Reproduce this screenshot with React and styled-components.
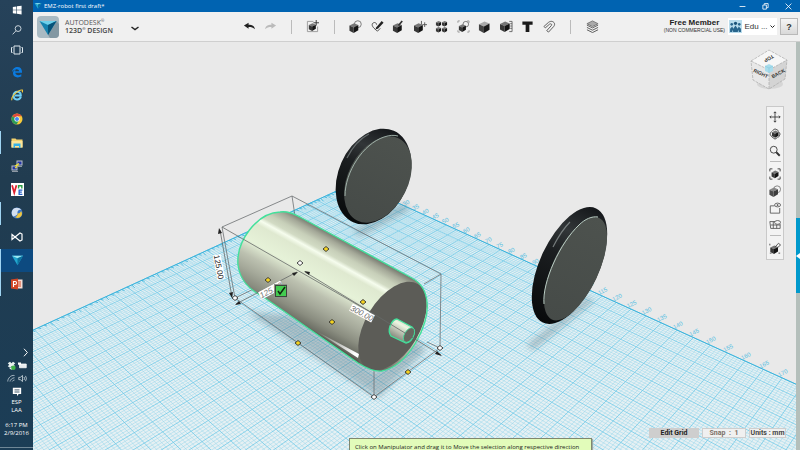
import React from "react";
import styled, { createGlobalStyle } from "styled-components";

const GlobalStyle = createGlobalStyle`
  * { box-sizing: border-box; }
  html, body, #root { height: 100%; }
  body { margin: 0; overflow: hidden; font-family: "Open Sans", "Noto Sans", sans-serif; }
  button { font: inherit; color: inherit; padding: 0; border: 0; background: none; cursor: pointer; }
  svg { display: block; }
`;

const Desktop = styled.div`
  display: grid;
  grid-template-columns: 33px 1fr;
  height: 100vh;
`;

/* ---------- Taskbar ---------- */
const Taskbar = styled.nav`
  display: flex;
  flex-direction: column;
  background: linear-gradient(#26425a, #213c50 40%, #1b3d56);
  color: #fff;
  min-height: 0;
`;
const SystemItems = styled.div`
  display: grid;
  grid-auto-rows: 20px;
`;
const AppItems = styled.div`
  display: flex;
  flex-direction: column;
  height: 236px;
`;
const TaskButton = styled.button`
  flex: 1;
  display: grid;
  place-items: center;
  background: ${(p) => (p.$active ? "#0d4a80" : "transparent")};
  border-left: 1px solid ${(p) => (p.$running ? "#9fd4f2" : "transparent")};
`;
const Tray = styled.div`
  margin-top: auto;
  display: flex;
  flex-direction: column;
  align-items: center;
  padding-bottom: 2px;
  font-size: 6px;
  line-height: 8px;
`;
const TrayRow = styled.div`
  display: flex;
  gap: 2px;
  height: 13px;
  align-items: center;
  align-self: ${(p) => (p.$end ? "flex-end" : "center")};
  padding: 0 3px;
`;
const TrayText = styled.div`
  text-align: center;
  padding-bottom: 7px;
`;
const ShowDesktop = styled.button`
  align-self: stretch;
  height: 4px;
  border-bottom: 1px solid #6f8797;
`;

/* ---------- Application window ---------- */
const Window = styled.main`
  display: grid;
  grid-template-rows: 12px 30px 1fr;
  min-width: 0;
  min-height: 0;
  background: #e9e9e9;
`;
const TitleBar = styled.header`
  display: flex;
  align-items: center;
  background: #0063b1;
  color: #fff;
  font-size: 6px;
  gap: 2px;
  padding-left: 1px;
`;
const WindowButtons = styled.div`
  margin-left: auto;
  display: flex;
  button { width: 23px; height: 12px; display: grid; place-items: center; }
`;
const Toolbar = styled.div`
  display: flex;
  align-items: center;
  background: #f0f0f0;
  border-bottom: 1px solid #cfcfcf;
  padding: 0 2px 0 4px;
`;
const Brand = styled.div`
  display: flex;
  align-items: center;
  gap: 6px;
  width: 202px;
`;
const BrandText = styled.div`
  font-size: 7px;
  line-height: 8px;
  color: #555;
  width: 56px;
  sup { font-size: 4px; line-height: 1px; }
  strong { font-weight: 600; color: #444; }
`;
const MenuButton = styled.button`
  display: grid;
  place-items: center;
  width: 16px;
  height: 22px;
  padding-top: 3px;
`;
const Tools = styled.div`
  display: flex;
  width: ${(p) => p.$width}px;
`;
const ToolButton = styled.button`
  flex: 1;
  height: 24px;
  display: grid;
  place-items: center;
  color: #222;
`;
const DividerCell = styled.span`
  flex: 1;
  display: grid;
  place-items: center;
`;
const Divider = styled.span`
  width: 1px;
  height: 14px;
  background: #bbb;
`;
const Account = styled.div`
  margin-left: auto;
  display: flex;
  align-items: center;
  gap: 3px;
  font-family: "Liberation Sans", Arial, sans-serif;
`;
const Membership = styled.div`
  text-align: center;
  font-size: 5px;
  line-height: 7px;
  color: #333;
  strong { display: block; font-size: 8px; line-height: 8px; color: #222; }
`;
const UserButton = styled.button`
  display: flex;
  align-items: center;
  justify-content: space-between;
  width: 49px;
  height: 17px;
  padding: 0 2px 0 1px;
  background: #fff;
  font-size: 8px;
  color: #333;
  white-space: nowrap;
`;
const HelpButton = styled.button`
  width: 18px;
  height: 17px;
  background: linear-gradient(#f5f5f5, #d9d9d9);
  border: 1px solid #b9b9b9;
  font-size: 9px;
  font-weight: 700;
  color: #333;
`;

/* ---------- Viewport ---------- */
const Body = styled.div`
  display: grid;
  grid-template-columns: 1fr 4px;
  min-height: 0;
`;
const Viewport = styled.section`
  position: relative;
  min-width: 0;
  min-height: 0;
  overflow: hidden;
`;
const SceneSvg = styled.svg`
  position: absolute;
  inset: 0;
  width: 100%;
  height: 100%;
`;
const SidePanel = styled.aside`
  background: #b4bfbb;
  padding-top: 176px;
`;
const PanelHandle = styled.button`
  display: grid;
  place-items: center;
  width: 4px;
  height: 75px;
  background: #0099cc;
`;
const ViewCube = styled.button`
  position: absolute;
  top: 5px;
  right: 7px;
`;
const NavBar = styled.div`
  position: absolute;
  top: 64px;
  right: 12px;
  width: 18px;
  display: flex;
  flex-direction: column;
  align-items: center;
  padding: 1px 0 3px;
  background: #f3f3f3;
  border: 1px solid #c9c9c9;
  button { height: 17px; width: 16px; display: grid; place-items: center; }
  hr { width: 11px; margin: 2px 0 3px; border: 0; border-top: 1px solid #bbb; }
`;
const StatusBar = styled.div`
  position: absolute;
  right: 10px;
  bottom: 12px;
  display: flex;
  gap: 3px;
  font: 700 7px/8px Roboto, sans-serif;
`;
const StatusButton = styled.button`
  height: 10px;
  min-width: ${(p) => p.$width}px;
  white-space: pre;
  color: ${(p) => p.$tone || "#444"};
  background: ${(p) => (p.$filled ? "#cecece" : "#f0f0f0")};
  border: 1px solid #cecece;
`;
const Hint = styled.div`
  position: absolute;
  left: 316px;
  bottom: -6px;
  min-width: 243px;
  padding: 0 5px;
  border: 1px solid #80876f;
  background: #e2fcba;
  color: #1c1c1c;
  font-size: 6px;
  line-height: 16px;
  white-space: nowrap;
  box-shadow: 1px 1px 1px #9aa;
`;

/* ---------- Icons ---------- */
function Cube({ x = 0, y = 0, s = 1, shade = ["#777", "#383838", "#151515"] }) {
  return (
    <g transform={`translate(${x} ${y}) scale(${s})`} stroke="none">
      <path d="M0 2.500 5 0 9.500 2 4.500 4.500Z" fill={shade[0]} />
      <path d="M0 2.500 4.500 4.500V10.500L0 8Z" fill={shade[1]} />
      <path d="M4.500 4.500 9.500 2V7.500L4.500 10.500Z" fill={shade[2]} />
    </g>
  );
}
const Icon = ({ children, size = 13 }) => (
  <svg width={size} height={size} viewBox="0 0 14 14" fill="none" stroke="#333" strokeWidth="1" aria-hidden="true">
    {children}
  </svg>
);

const creationTools = [
  ["Primitives", <><circle cx="9.500" cy="4.500" r="3.700" stroke="#777" /><Cube x={0.5} y={3.5} /></>],
  ["Sketch", <><path d="M7 12C3 9 .5 6.500 1.500 4 3.500 1.500 6 3 6 5M7 12l3-3" stroke="#444" /><path d="m5.500 8 6-7 2 2-6 6.500-2.500.5Z" fill="#222" stroke="none" /></>],
  ["Construct", <><Cube x={1} y={3.5} /><path d="m7 6 4-5" strokeWidth="1.800" /></>],
  ["Modify", <><Cube x={0} y={3.5} /><path d="M9 5h5M11.500 2.500v5M8 1v4" stroke="#555" /></>],
  ["Pattern", <><Cube x={1} y={1} s={0.58} /><Cube x={7.5} y={1} s={0.58} /><Cube x={1} y={7.5} s={0.58} /><Cube x={7.5} y={7.5} s={0.58} /></>],
  ["Grouping", <><path d="M1 3V1h2M11 1h2v2M13 11v2h-2M3 13H1v-2" stroke="#999" /><circle cx="9.500" cy="4.500" r="3" stroke="#777" /><Cube x={2} y={4.5} s={0.8} /></>],
  ["Combine", <Cube x={1} y={1.5} s={1.2} shade={["#aaa", "#444", "#1b1b1b"]} />],
  ["Measure", <><Cube x={0} y={1.5} s={1.1} /><path d="M10 1.500h3v11h-3M11 4h2M11 6.500h2M11 9h2" stroke="#666" /></>],
  ["Text", <path d="M1.500 1.500h11V5H9v8H5V5H1.500Z" fill="#1a1a1a" stroke="none" />],
  ["Snap", <path d="m1 7 5-4.500c4-3 8.500 1 5.500 4.500L6 13 4 11.500 9 6c1-1.500-.5-2.500-2-1.500L2.500 8.500Z" stroke="#555" />],
];

const navTools = [
  ["Pan", <path d="M7 1v12M1 7h12M5.500 2.500 7 1l1.500 1.500M5.500 11.500 7 13l1.500-1.500M2.500 5.500 1 7l1.500 1.500M11.500 5.500 13 7l-1.500 1.500" />],
  ["Orbit", <><path d="M3 10 1 7l2-3M4 3l3-2 4 2M11 4l2 3-2 4M10 11l-3 2-4-3" /><Cube x={3.5} y={3} s={0.8} /></>],
  ["Zoom", <><circle cx="5.500" cy="5.500" r="4" /><path d="m8.500 8.500 4 4" strokeWidth="2.200" /></>],
  null,
  ["Fit", <><path d="M1 4V1h3M10 1h3v3M13 10v3h-3M4 13H1v-3" /><Cube x={3} y={3} s={0.85} /></>],
  ["Material", <><circle cx="9.500" cy="5" r="4" stroke="#777" /><Cube x={0.5} y={3} s={1.05} shade={["#888", "#4c4c4c", "#3c3c3c"]} /></>],
  ["Solid visibility", <><path d="M1.500 4.500h5M12.500 7v6h-11V4.500" stroke="#555" /><ellipse cx="10" cy="3.500" rx="3.500" ry="2.200" stroke="#555" /><circle cx="10" cy="3.500" r="1" fill="#333" stroke="none" /></>],
  ["Grid visibility", <><path d="M1 3h6M2 7h11M2 11h11M1 3l1 8M5 3v8M9 7v4M13 6v5" stroke="#555" /><ellipse cx="10" cy="4" rx="3.500" ry="2.200" stroke="#555" /></>],
  null,
  ["Snapping", <><Cube x={1.5} y={4} s={0.95} /><path d="M1 2v2M1 13h2M11 13h2M7 6l4-4.500 2.500 2-4 3.500" stroke="#444" /></>],
];

const AppLogo = ({ size }) => (
  <svg width={size} height={size} viewBox="0 0 22 22" aria-hidden="true">
    <rect width="22" height="22" rx="4" fill="#a9bac3" />
    <path d="m19.500 5 2.500 3v10q0 4-4 4h-5l-2-3Z" fill="#8297a2" />
    <path d="M2.500 5h17L11 19Z" fill="#1682ae" />
    <path d="M2.500 5h17L11 9Z" fill="#6fd0ea" />
    <path d="M11 9v10l8.500-14Z" fill="#075278" />
  </svg>
);
const Gem = ({ size = 13 }) => (
  <svg width={size} height={size} viewBox="0 0 14 14" aria-hidden="true">
    <path d="M1 2h12L7 12Z" fill="#22a7cf" />
    <path d="M1 2h12L7 4.500Z" fill="#9ce8f4" />
    <path d="M7 4.500V12l6-10Z" fill="#0c719d" />
  </svg>
);

const TaskIcon = ({ children, size = 12 }) => (
  <svg width={size} height={size} viewBox="0 0 12 12" fill="none" aria-hidden="true">{children}</svg>
);

const systemItems = [
  ["Start", <TaskIcon size={10}><path d="M1 2.300 5.300 1.700v4H1ZM6 1.600 11.500.8v4.900H6ZM1 6.400h4.300v4L1 9.800ZM6 6.400h5.500v5L6 10.500Z" fill="#fff" /></TaskIcon>],
  ["Search", <TaskIcon size={10}><circle cx="7.300" cy="4.300" r="3.500" stroke="#e6edf2" /><path d="m4.800 6.900-4 4.300" stroke="#e6edf2" /></TaskIcon>],
  ["Task view", <TaskIcon><path d="M3 2h6v8H3ZM1.500 3.500H.5v5h1M10.500 3.500h1v5h-1" stroke="#dfe8ee" /></TaskIcon>],
];
const appItems = [
  ["Edge", {}, <TaskIcon><path d="M1 6C1.500 2.500 4 1 6.500 1 9.500 1 11.300 3.200 11 6.800H4.300c.2 2.500 3.500 3 6 1.500v2.300C6 12.500 1.800 11 2 7c.1-1.900 1.400-3 3-3.500-.6.5-.8 1-.9 1.700h4C8 2.500 3.500 2.300 1 6Z" fill="#0b7be0" /></TaskIcon>],
  ["Internet Explorer", {}, <TaskIcon><path d="M9.800 7.800C8.800 11.500 2.500 11.500 2.500 6.500S9.800 1.800 9.800 6.500H4" stroke="#6fd0f6" strokeWidth="2" /><path d="M1 11.300C-.5 8 7 .5 11.300 1c.5.500.3 1.500-.3 2.300" stroke="#f5c93a" strokeWidth="1.100" /></TaskIcon>],
  ["Chrome", {}, <TaskIcon><circle cx="6" cy="6" r="5.500" fill="#f7cb3b" /><path d="M6 6 1.200 3.300A5.500 5.500 0 0 1 10.800 3.300H6Z" fill="#de4a3b" /><path d="M6 6 1.200 3.300A5.500 5.500 0 0 0 5.500 11.500L8 7.500Z" fill="#2d9d58" /><circle cx="6" cy="6" r="2.600" fill="#fff" /><circle cx="6" cy="6" r="2" fill="#4285f4" /></TaskIcon>],
  ["File Explorer", { $running: true }, <TaskIcon><path d="M.5 1.500h4l1 1h6v8H.5Z" fill="#f5d36d" /><path d="M.5 4h11v6.500H.5Z" fill="#fce59a" /><path d="M2.500 6.500h7v4.500H8V9H4v2H2.500Z" fill="#35b2e8" /></TaskIcon>],
  ["PuTTY", {}, <TaskIcon><path d="M5.500.5h6v5h-6ZM.5 5.500h6v5h-6Z" fill="#b7bfc9" /><path d="M6.500 1.500h4v3h-4ZM1.500 6.500h4v3h-4Z" fill="#2437a8" /><path d="m8 3.500-3 2 2 .5-3 2" stroke="#f1df35" strokeWidth="1.200" /><path d="M6 6.500h5M1 11.500h6" stroke="#8d98a4" /></TaskIcon>],
  ["VNC", {}, <TaskIcon size={13}><path d="M0 0h12v12H0Z" fill="#fff" /><path d="m1 2 2 7 2-7" stroke="#e02230" strokeWidth="1.600" /><path d="M7 5V2.500h3V5" stroke="#2b9d45" strokeWidth="1.300" /><path d="M10.500 6.500H7.500v4h3M7.500 8.500h2.500" stroke="#2560c8" strokeWidth="1.200" /></TaskIcon>],
  ["Browser", { $running: true }, <TaskIcon><circle cx="6" cy="6" r="5.500" fill="#3a74c8" /><path d="M1 4C2 0 8-.5 10.500 3 8 2 6 4 6.500 6S4 9 2 9.500Q0 7 1 4Z" fill="#d3dff0" /><path d="M6.500 6c1 1 3 0 3.500-2 1.500 2 1.500 5-1.500 6.500-2 .8-4 .2-4.500-.5 2-.5 3-2 2.500-4Z" fill="#f0c63d" /></TaskIcon>],
  ["Visual Studio", {}, <TaskIcon><path d="M1 3.500 9 10l2-1V3L9 2 1 8.500Z" stroke="#fff" strokeWidth="1.200" /></TaskIcon>],
  ["123D Design", { $active: true, $running: true }, <Gem />],
  ["PowerPoint", { $running: true }, <TaskIcon><path d="M5 1.500h6.500v9H5Z" fill="#f5ddd5" /><path d="M7 4h3M7 6h3M7 8h3" stroke="#d24625" /><path d="M0 1.500 7 .5v11L0 10.500Z" fill="#d24625" /><path d="M2.500 9V3.500h1.700q1.300 0 1.300 1.500T4 6.500H2.500" stroke="#fff" strokeWidth="1.100" /></TaskIcon>],
];

/* ---------- 3D scene ---------- */
/* Ground plane to screen projection; one unit of u is 300 mm, one unit of v is 125 mm. */
function project(u, v) {
  const w = -0.164 * u + 0.0702 * v + 1;
  return [(77.7 * u + 86.06 * v + 235) / w, (31.8 * u - 15.2 * v + 298) / w];
}
const U0 = -0.487, U1 = 2.95, V0 = -3.45, V1 = 3.026;
const STEP_U = 0.079, STEP_V = 0.19;

function segments(divide, skip) {
  let d = "";
  const add = (a, b) => { d += `M${a[0].toFixed(1)} ${a[1].toFixed(1)}L${b[0].toFixed(1)} ${b[1].toFixed(1)}`; };
  for (let i = 0, u = U0; u < U1; i++, u = U0 + (i * STEP_U) / divide) {
    if (!skip || i % divide) add(project(u, V0), project(u, V1));
  }
  for (let i = 0, v = V1; v > V0; i++, v = V1 - (i * STEP_V) / divide) {
    if (!skip || i % divide) add(project(U0, v), project(U1, v));
  }
  return d;
}
const corners = [[U0, V0], [U0, V1], [U1, V1], [U1, V0]].map(([u, v]) => project(u, v).join(",")).join(" ");
const minorLines = segments(5, true);
const majorLines = segments(1, false);
const edgeLabels = Array.from({ length: 32 }, (_, i) => {
  const [x, y] = project(U0 + (i + 3) * STEP_U, V1);
  return { x: x - 3, y: y - 1, text: (i + 3) * 5 };
});
const edgeTicks = Array.from({ length: 80 }, (_, i) => {
  const [x, y] = project(U0, V1 - i * 0.068);
  return `M${x.toFixed(1)} ${y.toFixed(1)}l3 ${i % 5 ? 1 : 3}`;
}).join("");

const bodyOutline = "M280 212C288 211 294 214 300 217L412 278C421 283 426 290 427 302 430 325 408 366 382 371 375 372 366 368 358 363L262 296C248 289 240 280 238 265 236 242 256 213 280 212Z";
const controlPoints = [[326, 249], [268, 280], [363, 302], [332, 322], [298, 343], [408, 372]];
const cornerPoints = [[300, 263], [235, 298], [374, 397], [440, 348]];

const Marker = ({ x, y, fill = "#fff" }) => (
  <path d={`M${x - 3} ${y}l3-2.500 3 2.500-3 2.500Z`} fill={fill} stroke="#333" strokeWidth=".9" />
);
const DimensionLabel = ({ x, y, angle, children, width = 25, tone = "#222", slant = "normal" }) => (
  <g transform={`translate(${x} ${y}) rotate(${angle})`}>
    <rect x={-width / 2} y="-4" width={width} height="8" fill="#fff" />
    <text textAnchor="middle" y="3" fontSize="8" fontStyle={slant} fontFamily="Liberation Sans, Arial, sans-serif" fill={tone}>{children}</text>
  </g>
);

function Scene() {
  return (
    <SceneSvg viewBox="33 42 763 408" preserveAspectRatio="xMidYMid slice" role="img" aria-label="Robot body and two wheels on the work plane">
      <defs>
        <linearGradient id="body" gradientUnits="userSpaceOnUse" x1="355" y1="247" x2="309" y2="330">
          <stop offset="0" stopColor="#777a70" />
          <stop offset=".06" stopColor="#a4a898" />
          <stop offset=".14" stopColor="#c7cfb9" />
          <stop offset=".2" stopColor="#d2dbc4" />
          <stop offset=".24" stopColor="#f6fdee" />
          <stop offset=".29" stopColor="#dfe9d0" />
          <stop offset=".48" stopColor="#e6f2d8" />
          <stop offset=".53" stopColor="#d5dec8" />
          <stop offset=".62" stopColor="#bcc1b0" />
          <stop offset=".75" stopColor="#a5a99a" />
          <stop offset=".88" stopColor="#8a8d80" />
          <stop offset="1" stopColor="#65675e" />
        </linearGradient>
        <linearGradient id="pin" x1="1" y1="0" x2="0.400" y2="1">
          <stop offset="0" stopColor="#989b8e" />
          <stop offset=".4" stopColor="#eef6e3" />
          <stop offset="1" stopColor="#77796e" />
        </linearGradient>
        <linearGradient id="face" x1="0" y1="0" x2="1" y2="0">
          <stop offset="0" stopColor="#464b48" />
          <stop offset="1" stopColor="#4d524e" />
        </linearGradient>
        <linearGradient id="tire" x1="0" y1="0" x2="1" y2="0">
          <stop offset="0" stopColor="#080a0b" />
          <stop offset=".55" stopColor="#1b1e20" />
          <stop offset=".75" stopColor="#323638" />
          <stop offset="1" stopColor="#14171a" />
        </linearGradient>
        <linearGradient id="shine" x1="0" y1="0" x2="1" y2="0.700">
          <stop offset="0" stopColor="#fff" stopOpacity="0" />
          <stop offset="1" stopColor="#fff" />
        </linearGradient>
        <filter id="soft"><feGaussianBlur stdDeviation="3" /></filter>
      </defs>

      <polygon points={corners} fill="#e6f0f3" />
      <path d={minorLines} stroke="#86d0e9" strokeWidth=".5" opacity=".85" />
      <path d={majorLines} stroke="#5ec4e6" strokeWidth=".8" opacity=".85" />
      <path d={edgeTicks} stroke="#3ab3dc" strokeWidth=".8" />
      <polygon points={corners} fill="none" stroke="#3ab3dc" strokeWidth="1" />
      <g fontSize="6" fontFamily="Liberation Sans, Arial, sans-serif" fill="#56bfe2">
        {edgeLabels.map((l) => (
          <text key={l.text} transform={`translate(${l.x} ${l.y}) rotate(-26)`}>{l.text}</text>
        ))}
      </g>

      <g fill="#5b7480" filter="url(#soft)" opacity=".38">
        <path d="M247 312 290 315 376 372 415 338 426 350 378 398Z" />
        <path d="M352 232 402 204 411 209 362 236Z" />
        <path d="m527 345 60-48 7 4-61 49Z" />
      </g>

      <g>
        <ellipse cx="373.500" cy="176.500" rx="50" ry="35" transform="rotate(-66 373.500 176.500)" fill="url(#tire)" />
        <ellipse cx="378" cy="179.500" rx="46" ry="30" transform="rotate(-63 378 179.500)" fill="url(#face)" />
        <path d="M345 196C345 172 363 144 384 137 390 135 394 135 398 136" fill="none" stroke="#a9bcb3" strokeWidth=".9" />
        <path d="M347 158C353 146 361 138 369 134" fill="none" stroke="#7f8788" strokeWidth="1.200" opacity=".7" />
      </g>
      <g>
        <ellipse cx="569.500" cy="265.500" rx="63" ry="29.500" transform="rotate(-65 569.500 265.500)" fill="url(#tire)" />
        <ellipse cx="575.500" cy="268.700" rx="56" ry="23" transform="rotate(-65 575.500 268.700)" fill="url(#face)" />
        <path d="M544 304C542 282 560 243 579 225 585 219 592 216 598 217" fill="none" stroke="#b9ccc3" strokeWidth="1" />
        <path d="M553 247c5-10 9-17 17-25" fill="none" stroke="#899191" strokeWidth="1.200" opacity=".8" />
      </g>

      <path d="M222 227 292 196 441 274 440 348 374 397 235 298ZM292 196l3 20M374 397V370M441 274l-17 10M427 342l13 6M235 298l25-12" fill="none" stroke="#6c7072" strokeWidth=".8" />
      <path d={bodyOutline} fill="url(#body)" />
      <path d="M300 322 358 360 360 364Z" fill="#55574f" opacity=".7" />
      <path d="M316 331 359 354 358 358Z" fill="url(#shine)" />
      <ellipse cx="392.500" cy="326" rx="49" ry="27" transform="rotate(-59 392.500 326)" fill="#5c5c57" />
      <path d={bodyOutline} fill="none" stroke="#43e09b" strokeWidth="1.400" />
      <path d="M397 319 412 327Q415 330 414 334 412 342 406 343L391 336Q388 332 390 326 393 319 397 319Z" fill="url(#pin)" stroke="#43e09b" strokeWidth="1.300" />
      <ellipse cx="409" cy="335" rx="8" ry="4.500" transform="rotate(-60 409 335)" fill="#66675f" stroke="#43e09b" strokeWidth=".8" />

      <path d="M222 227 372 313M305 272 441 355M236 304 297 272M220 230 232 297" fill="none" stroke="#666a68" strokeWidth=".8" />
      <path d="m219 228-1 6 4-1ZM232 298l-3-5 4-1ZM235 305l6-1-2-3ZM298 272l-6 1 2 3ZM304 271l5 4 1-3ZM442 356l-7-2 2-3Z" fill="#222" />
      {cornerPoints.map(([x, y]) => <Marker key={x} x={x} y={y} />)}
      {controlPoints.map(([x, y]) => <Marker key={x} x={x} y={y} fill="#f4d321" />)}
      <DimensionLabel x={219} y={267} angle={79}>125.00</DimensionLabel>
      <DimensionLabel x={271} y={290} angle={-28} tone="#777" slant="italic">125.00</DimensionLabel>
      <DimensionLabel x={362} y={313} angle={28} tone="#666" slant="italic">300.00</DimensionLabel>
      <rect x="274" y="284" width="13" height="14" fill="#8d938a" />
      <rect x="275.500" y="285.500" width="11" height="11" fill="#43cc50" stroke="#3c453c" />
      <path d="m278 291 2 3 5-7" fill="none" stroke="#102610" strokeWidth="1.500" />
    </SceneSvg>
  );
}

function CubeNavigator() {
  return (
    <svg width="40" height="44" viewBox="0 0 40 44" aria-hidden="true">
      <ellipse cx="21" cy="37" rx="13" ry="5" fill="#d6d6d6" />
      <path d="M2 14 20 3 38 13 20 23Z" fill="#f6f6f6" />
      <path d="m2 14 18 9v19L4 33Z" fill="#e8e8e8" />
      <path d="m38 13-18 10v19l16-10Z" fill="#d4d4d4" />
      <path d="M2 14 20 3 38 13 36 32 20 42 4 33ZM2 14l18 9 18-10M20 23v19" fill="none" stroke="#aaa" strokeWidth=".7" strokeDasharray="3 1" />
      <path d="m16 19 4-2 4 2v5l-4 2-4-2Z" fill="#a8dcec" />
      <path d="m16 19 4 2 4-2M20 21v5" stroke="#7fc3d9" fill="none" strokeWidth=".5" />
      <g fontFamily="Liberation Sans, Arial, sans-serif" fontWeight="700" fontSize="5" fill="#333" textAnchor="middle">
        <text transform="translate(19 10) rotate(152)">TOP</text>
        <text transform="translate(11 28) rotate(24)">RIGHT</text>
        <text transform="translate(30 28) rotate(-28)">BACK</text>
      </g>
    </svg>
  );
}

export default function App() {
  return (
    <Desktop>
      <GlobalStyle />
      <Taskbar aria-label="Taskbar">
        <SystemItems>
          {systemItems.map(([name, icon]) => <TaskButton key={name} aria-label={name}>{icon}</TaskButton>)}
        </SystemItems>
        <AppItems>
          {appItems.map(([name, state, icon]) => <TaskButton key={name} aria-label={name} {...state}>{icon}</TaskButton>)}
        </AppItems>
        <Tray>
          <TrayRow $end>
            <TaskIcon size={9}><path d="m4 1 4.500 5L4 11" stroke="#fff" strokeWidth="1.300" /></TaskIcon>
          </TrayRow>
          <TrayRow>
            <TaskIcon size={9}><path d="m1 3 3-2 2 2 2-2 3 2-2 2 2 2-3 2-2-2-2 2-3-2 2-2ZM3 10l3-2 3 2-3 1.500Z" fill="#e8f1ee" /><circle cx="8.500" cy="9" r="3" fill="#42b549" /></TaskIcon>
            <TaskIcon size={9}><path d="M2 4h9v5H2Z" fill="#e8edf0" stroke="#fff" /><path d="M0 2h4v3H0Z" fill="#fff" /></TaskIcon>
          </TrayRow>
          <TrayRow>
            <TaskIcon size={9}><path d="M1 10C1 6 5 1 10 2M4 10c0-2 3-5 6-5M7 10q1-2 3-2" stroke="#cfdae1" /></TaskIcon>
            <TaskIcon size={9}><path d="M1 4.500h2L6 2v8L3 7.500H1ZM8 4q1.500 2 0 4M10 2.500q2.500 3.500 0 7" stroke="#dce5ea" /></TaskIcon>
          </TrayRow>
          <TrayRow>
            <TaskIcon size={10}><path d="M1 1h10v7.500H8L6 11V8.500H1Z" fill="#fff" /><path d="M3 3.500h6M3 6h6" stroke="#1d3c54" /></TaskIcon>
          </TrayRow>
          <TrayText>ESP<br />LAA</TrayText>
          <TrayText>6:17 PM<br />2/9/2016</TrayText>
          <ShowDesktop aria-label="Show desktop" />
        </Tray>
      </Taskbar>

      <Window>
        <TitleBar>
          <Gem size={8} />
          <span>EMZ-robot first draft*</span>
          <WindowButtons>
            <button aria-label="Minimize"><TaskIcon size={7}><path d="M1 6h10" stroke="#fff" strokeWidth="1.400" /></TaskIcon></button>
            <button aria-label="Restore"><TaskIcon size={7}><path d="M1.500 3.500h6v7h-6ZM4 3V1h6.500v7H8" stroke="#fff" strokeWidth="1.400" /></TaskIcon></button>
            <button aria-label="Close"><TaskIcon size={7}><path d="m1 1 10 10M11 1 1 11" stroke="#fff" strokeWidth="1.400" /></TaskIcon></button>
          </WindowButtons>
        </TitleBar>

        <Toolbar>
          <Brand>
            <AppLogo size={22} />
            <BrandText>AUTODESK<sup>®</sup><br /><strong>123D<sup>®</sup> DESIGN</strong></BrandText>
            <MenuButton aria-label="Application menu">
              <svg width="8" height="5" viewBox="0 0 8 5" fill="none" stroke="#222" strokeWidth="1.500" aria-hidden="true"><path d="m.5 1 3.500 2.500L7.500 1" /></svg>
            </MenuButton>
          </Brand>
          <Tools $width={42}>
            <ToolButton aria-label="Undo"><Icon><path d="M1 6 6 3v2c4 0 6 1 7 5-2-2-4-2.500-7-2.500V9.500Z" fill="#222" stroke="none" /></Icon></ToolButton>
            <ToolButton aria-label="Redo"><Icon><path d="M13 6 8 3v2c-4 0-6 1-7 5 2-2 4-2.500 7-2.500V9.500Z" fill="#bbb" stroke="none" /></Icon></ToolButton>
          </Tools>
          <Tools $width={64}>
            <DividerCell><Divider /></DividerCell>
            <ToolButton aria-label="Insert"><Icon><path d="M8 1.500H1.500v11h11V7" stroke="#999" /><path d="M11 0v6M8 3h6" /><Cube x={3} y={3.5} s={0.8} /></Icon></ToolButton>
            <DividerCell><Divider /></DividerCell>
          </Tools>
          <Tools $width={215}>
            {creationTools.map(([name, icon]) => <ToolButton key={name} aria-label={name}><Icon>{icon}</Icon></ToolButton>)}
          </Tools>
          <Tools $width={43}>
            <DividerCell><Divider /></DividerCell>
            <ToolButton aria-label="Material"><Icon>
              <path d="M1 4 7 1l6 3-6 3Z" fill="#aaa" stroke="#777" />
              <path d="m1 5.500 6 3 6-3M1 8l6 3 6-3M1 10.500l6 3 6-3" stroke="#555" />
            </Icon></ToolButton>
          </Tools>
          <Account>
            <Membership><strong>Free Member</strong>(NON COMMERCIAL USE)</Membership>
            <UserButton>
              <svg width="13" height="13" viewBox="0 0 12 12" aria-hidden="true">
                <path d="M0 0h12v12H0Z" fill="#b9dcec" />
                <path d="M1 11V8l2-2 1 2 2-3 2 3 1-2 2 2v3H9V9L8 11H4L3 9v2Z" fill="#28658c" />
                <circle cx="6" cy="3" r="1.500" fill="#1a5176" /><circle cx="2.500" cy="4" r="1.200" fill="#28658c" /><circle cx="9.500" cy="4" r="1.200" fill="#28658c" />
              </svg>
              <span>Edu ...</span>
              <svg width="5" height="4" viewBox="0 0 5 4" fill="none" stroke="#222" aria-hidden="true"><path d="m.5.500 2 2 2-2" /></svg>
            </UserButton>
            <HelpButton aria-label="Help">?</HelpButton>
          </Account>
        </Toolbar>

        <Body>
          <Viewport>
            <Scene />
            <ViewCube aria-label="View cube"><CubeNavigator /></ViewCube>
            <NavBar role="toolbar" aria-label="Navigation">
              {navTools.map((t, i) => (t ? <button key={t[0]} aria-label={t[0]}><Icon size={12}>{t[1]}</Icon></button> : <hr key={i} />))}
            </NavBar>
            <StatusBar>
              <StatusButton $filled $width={50} $tone="#222">Edit Grid</StatusButton>
              <StatusButton $width={44} $tone="#7b6f66">Snap  :  1</StatusButton>
              <StatusButton $width={37}>Units : mm</StatusButton>
            </StatusBar>
            <Hint role="tooltip">Click on Manipulator and drag it to Move the selection along respective direction</Hint>
          </Viewport>
          <SidePanel>
            <PanelHandle aria-label="Open parts library">
              <svg width="4" height="6" viewBox="0 0 4 6" aria-hidden="true"><path d="M4 0v6L0 3Z" fill="#fff" /></svg>
            </PanelHandle>
          </SidePanel>
        </Body>
      </Window>
    </Desktop>
  );
}
